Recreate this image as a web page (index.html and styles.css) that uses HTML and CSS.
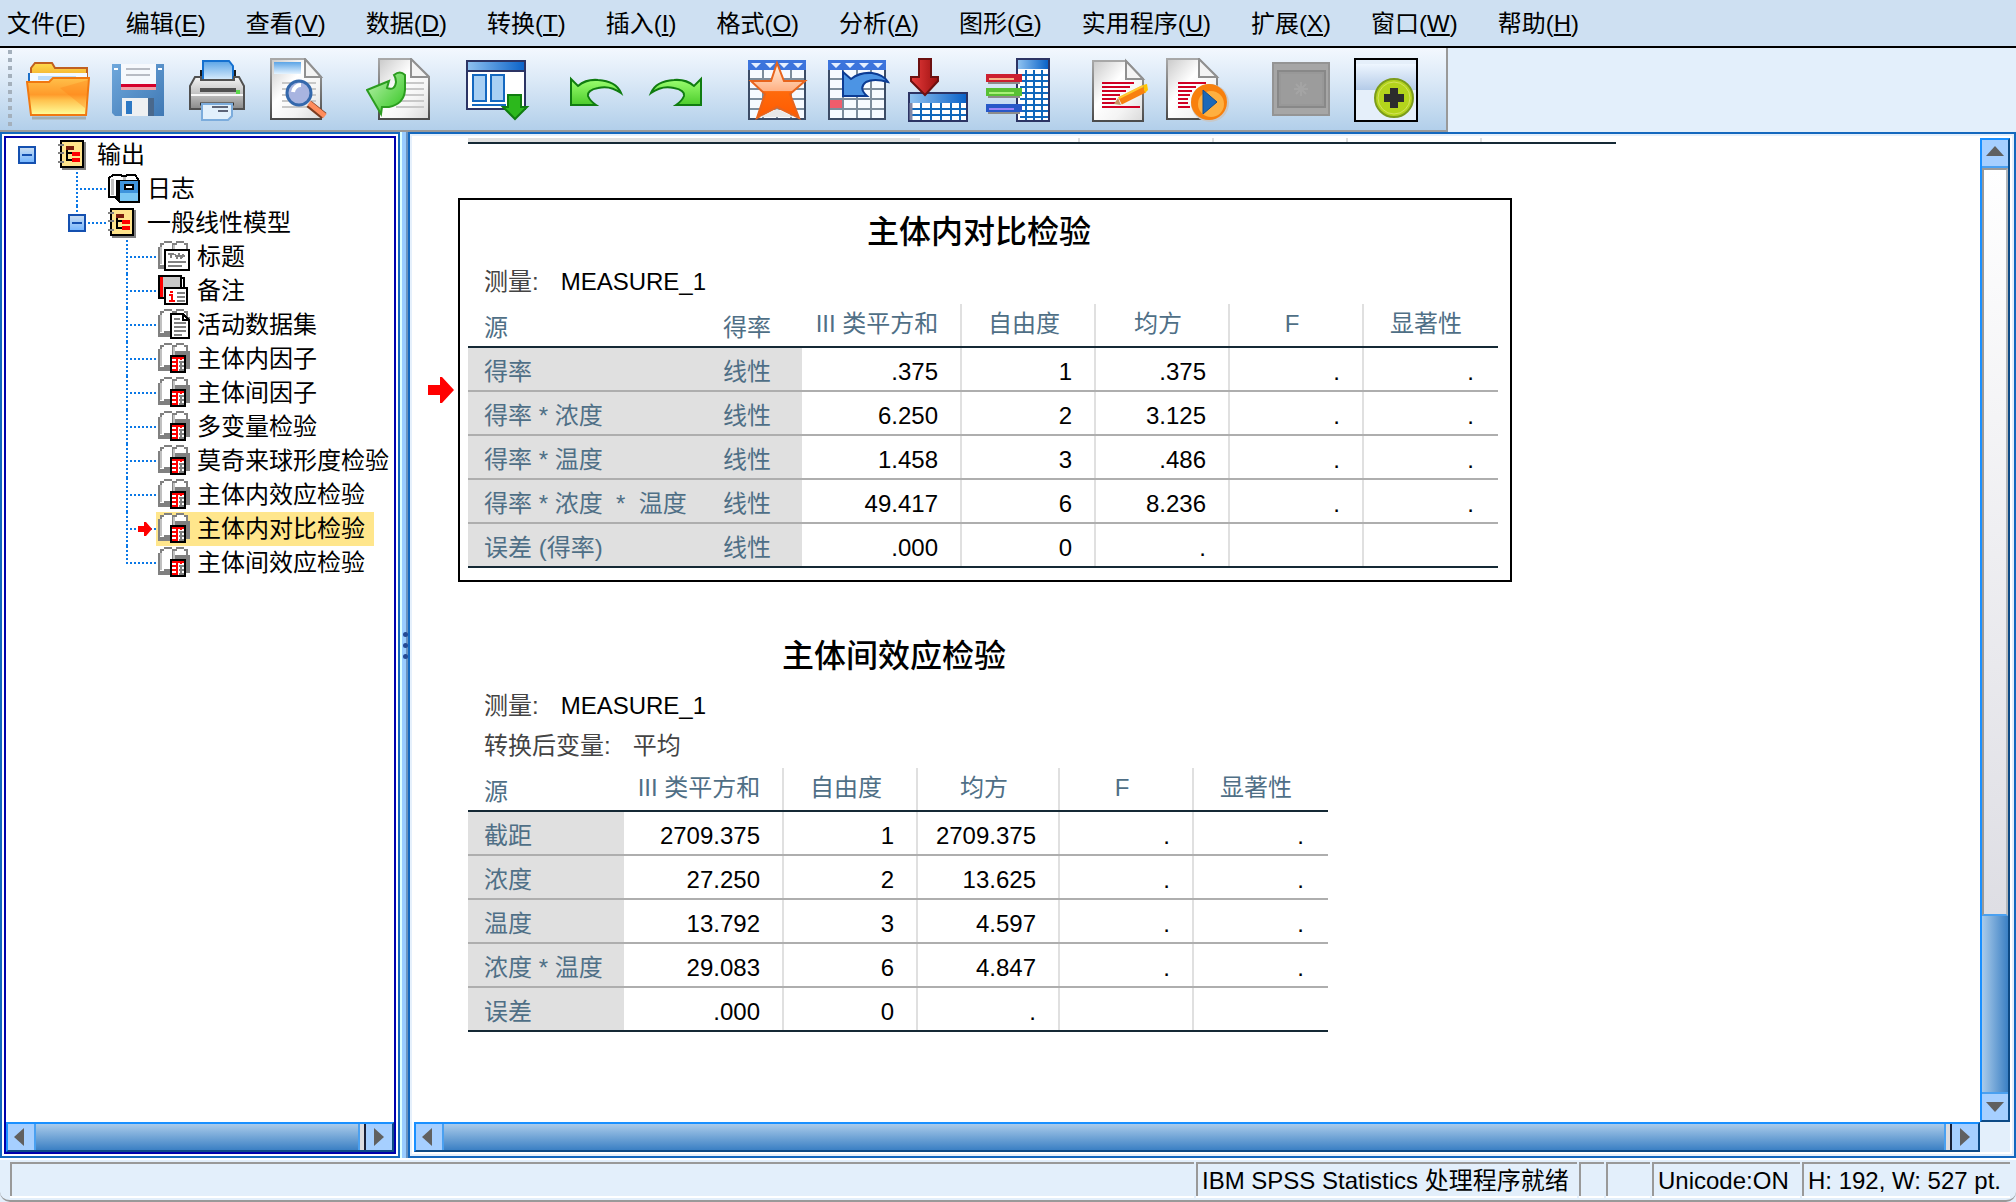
FILE: index.html
```
<!DOCTYPE html>
<html lang="zh-CN">

<head>
    <meta charset="UTF-8">
    <meta name="viewport" content="width=device-width, initial-scale=1.0">
    <title>输出 - IBM SPSS Statistics 查看器</title>

    <link rel="stylesheet" href="styles.css">
</head>

<body>
    <!-- shared shapes and gradients -->
    <svg class="defs" width="0" height="0" aria-hidden="true">
        <defs>
            <linearGradient id="g-orange" x1="0" y1="0" x2="0" y2="1">
                <stop offset="0" stop-color="#ffc04a" />
                <stop offset=".45" stop-color="#ff9a2a" />
                <stop offset=".6" stop-color="#ffc24e" />
                <stop offset="1" stop-color="#ffff9c" />
            </linearGradient>
            <linearGradient id="g-tab" x1="0" y1="0" x2="0" y2="1">
                <stop offset="0" stop-color="#ffdb4d" />
                <stop offset="1" stop-color="#f0a020" />
            </linearGradient>
            <linearGradient id="g-page" x1="0" y1="0" x2="1" y2="1">
                <stop offset="0" stop-color="#c9c9c9" />
                <stop offset=".4" stop-color="#ffffff" />
                <stop offset=".7" stop-color="#f4f4f4" />
                <stop offset="1" stop-color="#dadada" />
            </linearGradient>
            <linearGradient id="g-edge" x1="0" y1="0" x2="0" y2="1">
                <stop offset="0" stop-color="#a8a8a8" />
                <stop offset="1" stop-color="#4c4c4c" />
            </linearGradient>
            <linearGradient id="g-blue" x1="0" y1="0" x2="1" y2="0">
                <stop offset="0" stop-color="#8fc2f0" />
                <stop offset="1" stop-color="#0a62c8" />
            </linearGradient>
            <linearGradient id="g-sky" x1="0" y1="0" x2="0" y2="1">
                <stop offset="0" stop-color="#5ba4e6" />
                <stop offset="1" stop-color="#e6f4ff" />
            </linearGradient>
            <linearGradient id="g-floppy" x1="0" y1="0" x2="1" y2="1">
                <stop offset="0" stop-color="#6fa8dc" />
                <stop offset="1" stop-color="#3f78b4" />
            </linearGradient>
            <linearGradient id="g-metal" x1="0" y1="0" x2="0" y2="1">
                <stop offset="0" stop-color="#f4f4f4" />
                <stop offset=".5" stop-color="#c4c4c4" />
                <stop offset="1" stop-color="#8a8a8a" />
            </linearGradient>
            <linearGradient id="g-green" x1="0" y1="0" x2="1" y2="1">
                <stop offset="0" stop-color="#c0f5b4" />
                <stop offset="1" stop-color="#2fc41c" />
            </linearGradient>
            <linearGradient id="g-undo" x1="0" y1="0" x2="0" y2="1">
                <stop offset="0" stop-color="#9cff70" />
                <stop offset="1" stop-color="#4ccc2c" />
            </linearGradient>
            <linearGradient id="g-star" x1="0" y1="0" x2="0" y2="1">
                <stop offset="0" stop-color="#fff3e4" />
                <stop offset=".5" stop-color="#ffb184" />
                <stop offset=".52" stop-color="#ff6a0c" />
                <stop offset="1" stop-color="#ff5a00" />
            </linearGradient>
            <linearGradient id="g-red" x1="0" y1="0" x2="1" y2="0">
                <stop offset="0" stop-color="#e83c3c" />
                <stop offset="1" stop-color="#9c1010" />
            </linearGradient>
            <linearGradient id="g-pane" x1="0" y1="0" x2="0" y2="1">
                <stop offset="0" stop-color="#eef6ff" />
                <stop offset="1" stop-color="#b4cbe8" />
            </linearGradient>

            <symbol id="i-book" viewBox="0 0 32 32">
                <path d="M4 3H28V31H4Z" fill="#808080" />
                <path d="M3 2H25V28H3Z" fill="#ffe48c" stroke="#000" stroke-width="2" />
                <path d="M0 5h6v2H0zM0 13h6v2H0zM0 22h6v2H0z" fill="#808080" />
                <path d="M8 7h8v4H8z" fill="#7a1c0c" />
                <path d="M9 11v10h6M9 14h6" fill="none" stroke="#000" stroke-width="2" />
                <path d="M14 13h8v4h-8zM14 19h8v4h-8z" fill="#f00" />
            </symbol>
            <symbol id="i-open" viewBox="0 0 32 32">
                <path d="M0 6h2V2h4V0h8v2h4V0h8v2h4v6h2v18H14v2H0z" fill="#808080" />
                <path d="M2 6h2V4h2V2h8v20H6v2H2zM17 4h2V2h7v2h2v4H17z" fill="#fff" />
                <path d="M2 6h2v17H2zM15 4h2v18h-2z" fill="#c0c0c0" />
            </symbol>
            <symbol id="i-log" viewBox="0 0 32 32">
                <path d="M1 5L5 2H13L16 4L19 2H27L30 6V26H9L7 24H1Z" fill="#fff" stroke="#000" stroke-width="2" />
                <path d="M3 6h3v16H3zM15 4h3v4h-3z" fill="#c0c0c0" />
                <path d="M8 7H32V30H11L8 26Z" fill="#000" />
                <path d="M12 8H30V28H12Z" fill="#3f94dc" />
                <path d="M12 20H30V28H12Z" fill="#7cc8f4" />
                <path d="M17 12h8v4h-8z" fill="#fff" stroke="#000" stroke-width="2" />
            </symbol>
            <symbol id="i-title" viewBox="0 0 32 32">
                <use href="#i-open" />
                <path d="M7 9H31V29H7Z" fill="#fff" stroke="#000" stroke-width="2" />
                <path d="M10 13h6M13 13v4M17 13l2 4 2-4 2 4 2-3 2 2M10 21h18M10 25h14" fill="none" stroke="#808080"
                    stroke-width="2" />
            </symbol>
            <symbol id="i-note" viewBox="0 0 32 32">
                <path d="M1 1H23V23H1Z" fill="#c8c8c8" stroke="#000" stroke-width="2" />
                <path d="M2 2h3v20H2z" fill="#f00" />
                <path d="M23 3h3v12h-3z" fill="#fff" stroke="#000" stroke-width="2" />
                <path d="M7 13H29V29H7Z" fill="#fff" stroke="#000" stroke-width="2" />
                <path d="M12 16h3v2h-3zM11 19h4v6h2v2h-6v-2h2v-4h-2z" fill="#f00" />
                <path d="M19 18h8M19 22h8M19 26h8" stroke="#808080" stroke-width="2" />
            </symbol>
            <symbol id="i-data" viewBox="0 0 32 32">
                <use href="#i-open" />
                <path d="M13 5H25L31 11V29H13Z" fill="#fff" stroke="#000" stroke-width="2" />
                <path d="M25 5v6h6" fill="none" stroke="#000" stroke-width="2" />
                <path d="M16 10h6M16 14h12M16 18h12M16 22h12M16 26h8" stroke="#808080" stroke-width="2" />
            </symbol>
            <symbol id="i-pivot" viewBox="0 0 32 32">
                <use href="#i-open" />
                <path d="M13 13H27V29H13Z" fill="#fff" stroke="#000" stroke-width="2" />
                <path d="M14 15h12M19 14v14M14 19h6M14 23h6M23 14v3M14 27h6" stroke="#f00" stroke-width="2" />
                <path d="M21 19h5M21 23h5M21 27h5M23 18v10" stroke="#808080" stroke-width="2" />
            </symbol>
            <symbol id="i-sheet" viewBox="0 0 64 64">
                <path d="M3 3H59V61H3Z" fill="#f6faff" stroke="#3c4c66" stroke-width="2" />
                <path d="M2 2H60V12H2Z" fill="#3c74dc" />
                <path d="M5 5h10l-5 5zM19 5h10l-5 5zM33 5h10l-5 5zM47 5h10l-5 5z" fill="#e4efff" />
                <path d="M4 21H58M4 31H58M4 41H58M4 51H58M17 12V60M31 12V60M45 12V60" stroke="#7c8c9c"
                    stroke-width="2" />
            </symbol>
        </defs>
    </svg>

    <nav class="menubar" aria-label="菜单">
        <button type="button">文件(<u>F</u>)</button>
        <button type="button">编辑(<u>E</u>)</button>
        <button type="button">查看(<u>V</u>)</button>
        <button type="button">数据(<u>D</u>)</button>
        <button type="button">转换(<u>T</u>)</button>
        <button type="button">插入(<u>I</u>)</button>
        <button type="button">格式(<u>O</u>)</button>
        <button type="button">分析(<u>A</u>)</button>
        <button type="button">图形(<u>G</u>)</button>
        <button type="button">实用程序(<u>U</u>)</button>
        <button type="button">扩展(<u>X</u>)</button>
        <button type="button">窗口(<u>W</u>)</button>
        <button type="button">帮助(<u>H</u>)</button>
    </nav>

    <header class="toolbar-row">
        <div class="toolbar" role="toolbar" aria-label="工具栏">
            <span class="grip"></span>
            <div class="group">
                <button type="button" aria-label="打开">
                    <svg viewBox="0 0 64 64">
                        <path d="M6 60H60" stroke="#8a8a7a" stroke-width="3" opacity=".5" />
                        <path d="M5 24V10L9 5H26L29 10H61V24Z" fill="url(#g-tab)" stroke="#c06020" stroke-width="2" />
                        <path d="M3 24V15H61V24Z" fill="#f4faff" />
                        <path d="M3 25V15" stroke="#1c6fc8" stroke-width="2" />
                        <path d="M12 20H50" stroke="#bcdcf8" stroke-width="4" />
                        <path d="M1 24H23L27 20H63L60 57H5Z" fill="url(#g-orange)" stroke="#f07810" stroke-width="2" />
                        <path d="M34 30L62 22L59 50Z" fill="#ff7a10" opacity=".3" />
                    </svg>
                </button>
                <button type="button" aria-label="保存">
                    <svg viewBox="0 0 64 64">
                        <path d="M6 6H58V58H9L6 55Z" fill="url(#g-floppy)" />
                        <path d="M15 6H50V32H15Z" fill="#f6f9fd" />
                        <path d="M20 11H44M20 17H44" stroke="#b8bcc4" stroke-width="2" />
                        <path d="M15 26H50V29H15Z" fill="#d4002c" />
                        <path d="M15 29H50V32H15Z" fill="#f0a0a8" />
                        <path d="M8 10h4v2H8zM52 10h4v2h-4z" fill="#fff" />
                        <path d="M16 40H48V58H16Z" fill="#eef0f2" />
                        <path d="M42 40H48V58H42Z" fill="#49688c" />
                        <path d="M20 43H26V56H20Z" fill="#2c78c4" />
                    </svg>
                </button>
                <button type="button" aria-label="打印">
                    <svg viewBox="0 0 64 64">
                        <path d="M14 12H50V24H14Z" fill="#181818" />
                        <path d="M17 3H43L47 8V24H17Z" fill="url(#g-sky)" stroke="#1470d0" stroke-width="2" />
                        <path d="M9 19H15V22H48V19H53L58 28V51H4V28Z" fill="url(#g-metal)" stroke="#505050"
                            stroke-width="2" />
                        <path d="M14 32H50" stroke="#505050" stroke-width="4" />
                        <path d="M5 37H57" stroke="#f8f8f8" stroke-width="2" />
                        <path d="M50 32h4v4h-4z" fill="#5cd84c" />
                        <path d="M14 46H48" stroke="#303030" stroke-width="3" />
                        <path d="M16 46H46V58L42 62H16Z" fill="#e2f0fc" stroke="#7cacdc" stroke-width="2" />
                        <path d="M26 49H42M32 53H42" stroke="#5c6478" stroke-width="2" />
                    </svg>
                </button>
                <button type="button" aria-label="打印预览">
                    <svg viewBox="0 0 64 64">
                        <path d="M5 1H39L55 19V61H5Z" fill="url(#g-page)" stroke="url(#g-edge)" stroke-width="2" />
                        <path d="M39 1V19H55Z" fill="#f4f4f4" stroke="#909090" stroke-width="2" />
                        <path d="M8 4H35V16H8Z" fill="url(#g-sky)" />
                        <path d="M16 25H50M16 31H50M16 37H50M16 43H50M16 49H50" stroke="#c8c8c8" stroke-width="2" />
                        <path d="M43 46L58 58" stroke="#7c3c20" stroke-width="8" />
                        <path d="M43 45L59 58" stroke="#ff8c5c" stroke-width="5" />
                        <circle cx="33" cy="35" r="12" fill="#a8b4e0" stroke="#3468ac" stroke-width="3" />
                        <path d="M27 34a8 8 0 0 1 8-7" fill="none" stroke="#fff" stroke-width="4" />
                    </svg>
                </button>
            </div>
            <div class="group">
                <button type="button" aria-label="导出">
                    <svg viewBox="0 0 64 64">
                        <path d="M13 1H45L63 19V61H13Z" fill="url(#g-page)" stroke="url(#g-edge)" stroke-width="2" />
                        <path d="M45 1V19H63Z" fill="#f4f4f4" stroke="#909090" stroke-width="2" />
                        <path d="M30 25H58M30 31H58M30 37H58M30 43H58M30 49H58" stroke="#c8c8c8" stroke-width="2" />
                        <path d="M1 32L23 23L21 30Q29 33 30 24Q30 20 28 17Q34 12 39 17V32Q38 46 23 49H16L15 56Q8 44 1 32Z"
                            fill="url(#g-green)" stroke="#2c9c20" stroke-width="2" />
                    </svg>
                </button>
            </div>
            <div class="group">
                <button type="button" aria-label="重新调用对话框">
                    <svg viewBox="0 0 64 64">
                        <path d="M1 3H59V51H1Z" fill="#fff" stroke="#2c3464" stroke-width="2" />
                        <path d="M1 3H59V13H1Z" fill="url(#g-blue)" stroke="#2c3464" stroke-width="2" />
                        <path d="M7 17H20V43H7ZM25 17H38V43H25Z" fill="#a8d0f4" stroke="#1468c0" stroke-width="2" />
                        <path d="M6 47H40" stroke="#1468c0" stroke-width="2" />
                        <path d="M42 37H55V49H61L49 61L37 49H42Z" fill="#2cb81c" stroke="#107c10" stroke-width="2" />
                    </svg>
                </button>
            </div>
            <div class="group">
                <button type="button" aria-label="撤销">
                    <svg viewBox="0 0 64 64">
                        <path d="M5 21L12 28Q20 21 32 22Q50 23 55 35Q44 27 32 30Q21 32 22 38Q24 43 30 47H5Z"
                            fill="url(#g-undo)" stroke="#107c10" stroke-width="2" />
                    </svg>
                </button>
                <button type="button" aria-label="重做">
                    <svg viewBox="0 0 64 64">
                        <path d="M55 21L48 28Q40 21 28 22Q10 23 5 35Q16 27 28 30Q39 32 38 38Q36 43 30 47H55Z"
                            fill="url(#g-undo)" stroke="#107c10" stroke-width="2" />
                    </svg>
                </button>
            </div>
            <div class="group">
                <button type="button" aria-label="转到数据">
                    <svg viewBox="0 0 64 64">
                        <use href="#i-sheet" />
                        <path d="M31 5L38 23H59L44 36L53 60L31 49L11 60L19 36L5 23H25Z" fill="url(#g-star)"
                            stroke="#e8641c" stroke-width="2" />
                        <path d="M31 51L48 59H14Z" fill="#e8e8e8" />
                    </svg>
                </button>
                <button type="button" aria-label="转到个案">
                    <svg viewBox="0 0 64 64">
                        <use href="#i-sheet" />
                        <path d="M4 42H16V50H4Z" fill="#f05c6c" />
                        <path d="M17 14L25 21Q34 14 46 15Q58 17 62 24Q48 20 40 24Q32 30 41 38H17Z" fill="#4c94e4"
                            stroke="#0c3c94" stroke-width="2" />
                    </svg>
                </button>
                <button type="button" aria-label="转到变量">
                    <svg viewBox="0 0 64 64">
                        <path d="M3 35H61V63H3Z" fill="#fff" stroke="#2c3464" stroke-width="2" />
                        <path d="M4 36H60V45H4Z" fill="url(#g-blue)" />
                        <path d="M4 51H60M4 57H60M15 45V62M25 45V62M35 45V62M45 45V62M54 45V62" stroke="#1068bc"
                            stroke-width="2" />
                        <path d="M5 45V62" stroke="#8088a8" stroke-width="3" />
                        <path d="M13 1H25V19H32V23L19 37L5 23V19H13Z" fill="url(#g-red)" stroke="#6c1010"
                            stroke-width="2" />
                    </svg>
                </button>
                <button type="button" aria-label="变量">
                    <svg viewBox="0 0 64 64">
                        <path d="M31 1H63V63H31Z" fill="#fff" stroke="#2c3464" stroke-width="2" />
                        <path d="M32 2H62V11H32Z" fill="url(#g-blue)" />
                        <path d="M34 17H62M34 23H62M34 29H62M34 35H62M34 41H62M34 47H62M34 53H62M34 59H62M40 12V62M48 12V62M56 12V62"
                            stroke="#1068bc" stroke-width="2" />
                        <path d="M2 25H34M2 39H34M2 55H34" stroke="#8c8c8c" stroke-width="2" />
                        <path d="M0 16H36V24H0Z" fill="#cc2030" />
                        <path d="M0 30H36V38H0Z" fill="#58c034" />
                        <path d="M0 46H36V54H0Z" fill="#2858c8" />
                        <path d="M3 21H28" stroke="#f8b488" stroke-width="2" />
                        <path d="M3 35H28" stroke="#a8f078" stroke-width="2" />
                        <path d="M3 51H28" stroke="#9c84f8" stroke-width="2" />
                    </svg>
                </button>
            </div>
            <div class="group">
                <button type="button" aria-label="编辑语法">
                    <svg viewBox="0 0 64 64">
                        <path d="M7 3H40L57 21V63H7Z" fill="url(#g-page)" stroke="url(#g-edge)" stroke-width="2" />
                        <path d="M40 3V21H57Z" fill="#f4f4f4" stroke="#909090" stroke-width="2" />
                        <path d="M16 25H48M16 29H44M16 33H40M16 37H34M16 41H30M16 45H32M16 49H54" stroke="#d00024"
                            stroke-width="2" />
                        <path d="M34 43L58 31" stroke="#f88010" stroke-width="8" />
                        <path d="M33 40L57 28" stroke="#ffc830" stroke-width="2" />
                        <path d="M57 27L61 26L62 32L59 35Z" fill="#ffc400" />
                        <path d="M32 40L35 47L28 46Z" fill="#c89060" />
                    </svg>
                </button>
                <button type="button" aria-label="运行语法">
                    <svg viewBox="0 0 64 64">
                        <path d="M1 1H33L51 19V61H1Z" fill="url(#g-page)" stroke="url(#g-edge)" stroke-width="2" />
                        <path d="M33 1V19H51Z" fill="#f4f4f4" stroke="#909090" stroke-width="2" />
                        <path d="M12 25H40M12 29H30M12 33H26M12 37H24M12 41H22M12 45H22M12 49H24" stroke="#d00024"
                            stroke-width="2" />
                        <circle cx="44" cy="45" r="19" fill="#c8c8c8" />
                        <circle cx="43" cy="44" r="18" fill="#f8800c" />
                        <circle cx="45" cy="46" r="13" fill="#ffb040" />
                        <path d="M37 32L51 44L37 56Z" fill="#1c68b8" stroke="#104c90" stroke-width="1" />
                    </svg>
                </button>
            </div>
            <div class="group group-last">
                <button type="button" aria-label="选择最后输出" disabled>
                    <svg viewBox="0 0 64 64">
                        <path d="M6 4H64V58H6Z" fill="#a6a6a6" />
                        <path d="M7 5H63V57H7Z" fill="none" stroke="#949494" stroke-width="2" />
                        <path d="M12 13H59V49H12Z" fill="#989898" stroke="#888888" stroke-width="2" />
                        <path d="M15 16H56V46H15Z" fill="#9c9c9c" />
                        <path d="M35 24v14M28 31h14M30 26l10 10M40 26l-10 10" stroke="#a4a4a4" stroke-width="2" />
                    </svg>
                </button>
                <button type="button" aria-label="关联自动脚本">
                    <svg viewBox="0 0 64 64">
                        <path d="M1 1H63V63H1Z" fill="#e5effa" stroke="#000" stroke-width="2" />
                        <path d="M2 6H62V32H2Z" fill="url(#g-pane)" />
                        <circle cx="40" cy="40" r="19" fill="#b4d41c" stroke="#7c9c1c" stroke-width="2" />
                        <circle cx="40" cy="40" r="16" fill="none" stroke="#d4e45c" stroke-width="1" />
                        <path d="M36 30h8v6h6v8h-6v6h-8v-6h-6v-8h6z" fill="#2c2c2c" />
                    </svg>
                </button>
            </div>
        </div>
    </header>

    <main class="workspace">
        <aside class="outline">
            <div class="outline-inner">
                <ul class="tree">
                    <li>
                        <div class="row"><span class="elbow"><button class="toggle" type="button"
                                    aria-label="折叠"></button></span><a class="node" href="#output"><svg>
                                    <use href="#i-book" />
                                </svg>输出</a></div>
                        <ul>
                            <li>
                                <div class="row"><span class="elbow"></span><a class="node" href="#output"><svg>
                                            <use href="#i-log" />
                                        </svg>日志</a></div>
                            </li>
                            <li>
                                <div class="row"><span class="elbow"><button class="toggle" type="button"
                                            aria-label="折叠"></button></span><a class="node" href="#output"><svg>
                                            <use href="#i-book" />
                                        </svg>一般线性模型</a></div>
                                <ul>
                                    <li>
                                        <div class="row"><span class="elbow"></span><a class="node" href="#output"><svg>
                                                    <use href="#i-title" />
                                                </svg>标题</a></div>
                                    </li>
                                    <li>
                                        <div class="row"><span class="elbow"></span><a class="node" href="#output"><svg>
                                                    <use href="#i-note" />
                                                </svg>备注</a></div>
                                    </li>
                                    <li>
                                        <div class="row"><span class="elbow"></span><a class="node" href="#output"><svg>
                                                    <use href="#i-data" />
                                                </svg>活动数据集</a></div>
                                    </li>
                                    <li>
                                        <div class="row"><span class="elbow"></span><a class="node" href="#output"><svg>
                                                    <use href="#i-pivot" />
                                                </svg>主体内因子</a></div>
                                    </li>
                                    <li>
                                        <div class="row"><span class="elbow"></span><a class="node" href="#output"><svg>
                                                    <use href="#i-pivot" />
                                                </svg>主体间因子</a></div>
                                    </li>
                                    <li>
                                        <div class="row"><span class="elbow"></span><a class="node" href="#output"><svg>
                                                    <use href="#i-pivot" />
                                                </svg>多变量检验</a></div>
                                    </li>
                                    <li>
                                        <div class="row"><span class="elbow"></span><a class="node" href="#output"><svg>
                                                    <use href="#i-pivot" />
                                                </svg>莫奇来球形度检验</a></div>
                                    </li>
                                    <li>
                                        <div class="row"><span class="elbow"></span><a class="node" href="#output"><svg>
                                                    <use href="#i-pivot" />
                                                </svg>主体内效应检验</a></div>
                                    </li>
                                    <li>
                                        <div class="row"><span class="elbow"><svg class="pointer"
                                                    viewBox="0 0 14 14">
                                                    <path d="M0 4h6V0h2l6 7-6 7H6v-4H0z" />
                                                </svg></span><a class="node selected" href="#within"><svg>
                                                    <use href="#i-pivot" />
                                                </svg>主体内对比检验</a></div>
                                    </li>
                                    <li>
                                        <div class="row"><span class="elbow"></span><a class="node" href="#between"><svg>
                                                    <use href="#i-pivot" />
                                                </svg>主体间效应检验</a></div>
                                    </li>
                                </ul>
                            </li>
                        </ul>
                    </li>
                </ul>
                <div class="hscroll">
                    <button type="button" aria-label="向左"><svg viewBox="0 0 26 26">
                            <path d="M16 4v18L6 13z" />
                        </svg></button>
                    <span class="track"><span class="thumb"></span></span>
                    <button type="button" aria-label="向右"><svg viewBox="0 0 26 26">
                            <path d="M8 4v18l10-9z" />
                        </svg></button>
                </div>
            </div>
        </aside>

        <div class="splitter"><i></i><i></i><i></i></div>

        <section class="viewer">
            <div class="output" id="output">
                <!-- bottom edge of the table scrolled out above -->
                <div class="scrolled-table"><i></i><i></i><i></i><i></i><i></i><i></i></div>

                <div class="item">
                    <svg class="marker" viewBox="0 0 26 26">
                        <path d="M0 8h12V0h2l12 13-12 13h-2v-8H0z" />
                    </svg>
                    <article class="pivot active" id="within">
                        <h2>主体内对比检验</h2>
                        <p><span>测量:</span>MEASURE_1</p>
                        <table>
                            <colgroup>
                                <col class="c-source">
                                <col class="c-yield">
                                <col class="c-sum">
                                <col class="c-num">
                                <col class="c-num">
                                <col class="c-num">
                                <col class="c-num">
                            </colgroup>
                            <thead>
                                <tr><th class="stub">源</th><th class="stub">得率</th><th>III 类平方和</th><th>自由度</th><th>均方</th><th>F</th><th>显著性</th></tr>
                            </thead>
                            <tbody>
                                <tr><th>得率</th><th>线性</th><td>.375</td><td>1</td><td>.375</td><td>.</td><td>.</td></tr>
                                <tr><th>得率 * 浓度</th><th>线性</th><td>6.250</td><td>2</td><td>3.125</td><td>.</td><td>.</td></tr>
                                <tr><th>得率 * 温度</th><th>线性</th><td>1.458</td><td>3</td><td>.486</td><td>.</td><td>.</td></tr>
                                <tr><th>得率 * 浓度&nbsp; * &nbsp;温度</th><th>线性</th><td>49.417</td><td>6</td><td>8.236</td><td>.</td><td>.</td></tr>
                                <tr><th>误差 (得率)</th><th>线性</th><td>.000</td><td>0</td><td>.</td><td></td><td></td></tr>
                            </tbody>
                        </table>
                    </article>
                </div>

                <div class="item">
                    <span class="marker"></span>
                    <article class="pivot" id="between">
                        <h2>主体间效应检验</h2>
                        <p><span>测量:</span>MEASURE_1</p>
                        <p><span>转换后变量:</span><span>平均</span></p>
                        <table>
                            <colgroup>
                                <col class="c-factor">
                                <col class="c-sum">
                                <col class="c-num">
                                <col class="c-mean">
                                <col class="c-num">
                                <col class="c-num">
                            </colgroup>
                            <thead>
                                <tr><th class="stub">源</th><th>III 类平方和</th><th>自由度</th><th>均方</th><th>F</th><th>显著性</th></tr>
                            </thead>
                            <tbody>
                                <tr><th>截距</th><td>2709.375</td><td>1</td><td>2709.375</td><td>.</td><td>.</td></tr>
                                <tr><th>浓度</th><td>27.250</td><td>2</td><td>13.625</td><td>.</td><td>.</td></tr>
                                <tr><th>温度</th><td>13.792</td><td>3</td><td>4.597</td><td>.</td><td>.</td></tr>
                                <tr><th>浓度 * 温度</th><td>29.083</td><td>6</td><td>4.847</td><td>.</td><td>.</td></tr>
                                <tr><th>误差</th><td>.000</td><td>0</td><td>.</td><td></td><td></td></tr>
                            </tbody>
                        </table>
                    </article>
                </div>
            </div>

            <div class="vscroll">
                <button type="button" aria-label="向上"><svg viewBox="0 0 26 26">
                        <path d="M4 16h18L13 6z" />
                    </svg></button>
                <span class="track"><span class="thumb"></span></span>
                <button type="button" aria-label="向下"><svg viewBox="0 0 26 26">
                        <path d="M4 8h18l-9 10z" />
                    </svg></button>
            </div>
            <div class="hscroll">
                <button type="button" aria-label="向左"><svg viewBox="0 0 26 26">
                        <path d="M16 4v18L6 13z" />
                    </svg></button>
                <span class="track"><span class="thumb"></span></span>
                <button type="button" aria-label="向右"><svg viewBox="0 0 26 26">
                        <path d="M8 4v18l10-9z" />
                    </svg></button>
            </div>
            <div class="corner"></div>
        </section>
    </main>

    <footer class="statusbar">
        <span class="s-message"></span>
        <span class="s-processor">IBM SPSS Statistics 处理程序就绪</span>
        <span class="s-cases"></span>
        <span class="s-filter"></span>
        <span class="s-unicode">Unicode:ON</span>
        <span class="s-size">H: 192, W: 527 pt.</span>
    </footer>
</body>

</html>
```
FILE: styles.css
```
* {
    box-sizing: border-box;
}

body {
    display: flex;
    flex-direction: column;
    height: 100vh;
    margin: 0;
    overflow: hidden;
    font-family: "Liberation Sans", "Noto Sans CJK SC", sans-serif;
    font-size: 24px;
    line-height: 34px;
    color: #000;
    background: #e3effb;
}

button {
    padding: 0;
    border: 0;
    background: none;
    font: inherit;
    color: inherit;
}

svg {
    display: block;
}

.defs {
    position: absolute;
}

/* menu */

.menubar {
    display: flex;
    flex: none;
    gap: 40px;
    height: 48px;
    padding: 2px 7px 0;
    border-bottom: 2px solid #000;
    background: #cee0f2;
}

.menubar button {
    white-space: nowrap;
}

.menubar u {
    text-decoration-thickness: 2px;
    text-underline-offset: 2px;
}

/* toolbar */

.toolbar-row {
    display: flex;
    flex: none;
    height: 84px;
}

.toolbar {
    display: flex;
    align-items: center;
    gap: 36px;
    padding: 2px 28px 0 8px;
    border-right: 2px solid #999;
    border-bottom: 2px solid #999;
    background: linear-gradient(#f3f8fe, #dbe9f7 40%, #b2cfea);
}

.grip {
    align-self: stretch;
    width: 4px;
    margin-right: -22px;
    background: repeating-linear-gradient(#a4b0bc 0 4px, transparent 4px 8px);
}

.group {
    display: flex;
    gap: 16px;
}

.group-last {
    gap: 24px;
}

.group svg {
    width: 64px;
    height: 64px;
}

/* workspace */

.workspace {
    display: flex;
    flex: 1;
    min-height: 0;
}

.outline {
    flex: none;
    width: 400px;
    padding: 2px;
    border: 2px solid #1468be;
    background: #fff;
}

.outline-inner {
    display: flex;
    flex-direction: column;
    height: 100%;
    border: 2px solid #0000ac;
}

.tree {
    flex: 1;
    padding-left: 20px;
}

.tree,
.tree ul {
    margin: 0;
    list-style: none;
}

.tree ul {
    padding-left: 50px;
}

.tree ul li {
    background: repeating-linear-gradient(#0a78e6 0 2px, transparent 2px 4px) 0 0 / 2px 100% no-repeat;
}

.tree ul li:last-child {
    background-size: 2px 18px;
}

.row {
    display: flex;
    align-items: center;
    height: 34px;
}

.elbow {
    display: flex;
    flex: none;
    align-items: center;
    width: 30px;
    height: 18px;
}

.tree ul .elbow {
    background: repeating-linear-gradient(90deg, #0a78e6 0 2px, transparent 2px 4px) 0 50% / 100% 2px no-repeat;
}

.toggle {
    width: 18px;
    height: 18px;
    margin-left: -8px;
    border: 2px solid #1450b0;
    background: linear-gradient(#1450b0, #1450b0) center / 10px 2px no-repeat, linear-gradient(#c8dcf0, #78b8ff);
}

.pointer {
    width: 14px;
    height: 14px;
    margin-left: 12px;
    fill: #f00;
}

.node {
    display: flex;
    flex: none;
    align-items: center;
    gap: 7px;
    height: 34px;
    padding: 0 9px 0 2px;
    line-height: 32px;
    color: inherit;
    text-decoration: none;
    white-space: nowrap;
}

.node svg {
    width: 32px;
    height: 32px;
    shape-rendering: crispEdges;
}

.selected {
    background: #ffe68c;
}

.splitter {
    display: flex;
    flex: none;
    flex-direction: column;
    align-items: flex-end;
    justify-content: center;
    gap: 6px;
    width: 8px;
    background: linear-gradient(90deg, #dcffff 0 2px, #99ccff 2px 6px, #6a93c0 6px);
}

.splitter i {
    width: 5px;
    height: 5px;
    border-radius: 50%;
    background: #244a94;
}

.viewer {
    display: grid;
    flex: 1;
    grid-template-columns: 1fr 30px;
    grid-template-rows: 1fr 30px;
    min-width: 0;
    padding: 4px;
    border: 2px solid #1468be;
    background: #fff;
    box-shadow: inset 0 0 0 2px #e5f0fc;
}

.corner {
    background: #e3effb;
}

/* scroll bars */

.hscroll,
.vscroll {
    display: flex;
    border: 2px solid #1a90ff;
    border-right-color: #0d4a85;
    border-bottom-color: #0d4a85;
}

.hscroll {
    flex: none;
    height: 30px;
    background: linear-gradient(#aacbea, #3b80c4);
}

.vscroll {
    flex-direction: column;
    background: linear-gradient(90deg, #aacbea, #3b80c4);
}

.hscroll button,
.vscroll button {
    flex: none;
    width: 26px;
    height: 26px;
    background: #a6cfff;
    fill: #606060;
}

.track {
    display: flex;
    flex: 1;
    min-height: 0;
}

.hscroll .track {
    justify-content: flex-end;
    border-left: 2px solid #4aa0f0;
}

.hscroll .thumb {
    width: 8px;
    border-right: 2px solid #182038;
    border-left: 2px solid #4aa0f0;
    background: #dcdce0;
}

.vscroll .track {
    border-top: 2px solid #4aa0f0;
    border-bottom: 2px solid #4aa0f0;
}

.vscroll .thumb {
    width: 100%;
    height: 81%;
    border: 2px solid #999;
    border-right-color: #b4b8bc;
    border-bottom-color: #4aa0f0;
    background: linear-gradient(#fff, #dedee4);
}

/* output */

.output {
    min-width: 0;
    overflow: hidden;
}

.scrolled-table {
    display: grid;
    grid-template-columns: 452px 160px repeat(4, 134px);
    width: max-content;
    height: 6px;
    margin-left: 54px;
    border-bottom: 2px solid #152935;
}

.scrolled-table i {
    border-right: 2px solid #e0e0e0;
}

.scrolled-table i:first-child {
    background: #e0e0e0;
}

.scrolled-table i:last-child {
    border-right: 0;
}

.item {
    display: flex;
    align-items: center;
    gap: 4px;
    margin-top: 54px;
    padding-left: 14px;
}

.item + .item {
    margin-top: 40px;
}

.marker {
    flex: none;
    width: 26px;
    height: 26px;
    fill: #f00;
}

.pivot {
    padding: 0 12px 12px 8px;
    border: 2px solid transparent;
}

.pivot.active {
    border-color: #000;
}

.pivot h2 {
    margin: 0;
    padding-right: 8px;
    font-size: 32px;
    font-weight: 500;
    line-height: 64px;
    text-align: center;
}

.pivot p {
    display: flex;
    gap: 22px;
    margin: 0;
    padding: 1px 0 5px 16px;
}

.pivot p span {
    color: #444;
}

table {
    table-layout: fixed;
    width: min-content;
    border-spacing: 0;
}

.c-source {
    width: 239px;
}

.c-yield {
    width: 95px;
}

.c-factor {
    width: 156px;
}

.c-sum {
    width: 160px;
}

.c-num {
    width: 134px;
}

.c-mean {
    width: 142px;
}

th,
td {
    height: 44px;
    padding: 0;
    border-bottom: 2px solid #aeaeae;
    white-space: nowrap;
}

th {
    font-weight: 400;
    color: #4f6f86;
}

thead th {
    padding: 0 10px 2px 0;
    border-bottom-color: #152935;
}

thead th:not(.stub),
td {
    background: linear-gradient(#e0e0e0, #e0e0e0) right / 2px 100% no-repeat;
}

thead th:last-child,
td:last-child {
    background: none;
}

thead .stub,
tbody th {
    padding: 6px 0 0 16px;
    text-align: left;
}

tbody th {
    background: #e0e0e0;
}

td {
    padding: 6px 24px 0 0;
    text-align: right;
}

tbody tr:last-child > * {
    border-bottom-color: #152935;
}

/* status bar */

.statusbar {
    display: flex;
    flex: none;
    gap: 2px;
    height: 44px;
    padding: 4px 6px 4px 10px;
    border-bottom: 2px solid #999;
    border-radius: 0 0 10px 10px;
    box-shadow: inset 0 2px #fff;
}

.statusbar span {
    height: 34px;
    padding-left: 4px;
    border-top: 2px solid #999;
    border-left: 2px solid #999;
    box-shadow: 0 2px #fff;
    white-space: nowrap;
}

.s-message {
    flex: 1;
}

.s-processor {
    width: 381px;
}

.s-cases {
    width: 25px;
}

.s-filter {
    width: 44px;
}

.s-unicode {
    width: 148px;
}

.s-size {
    width: 208px;
}
```
